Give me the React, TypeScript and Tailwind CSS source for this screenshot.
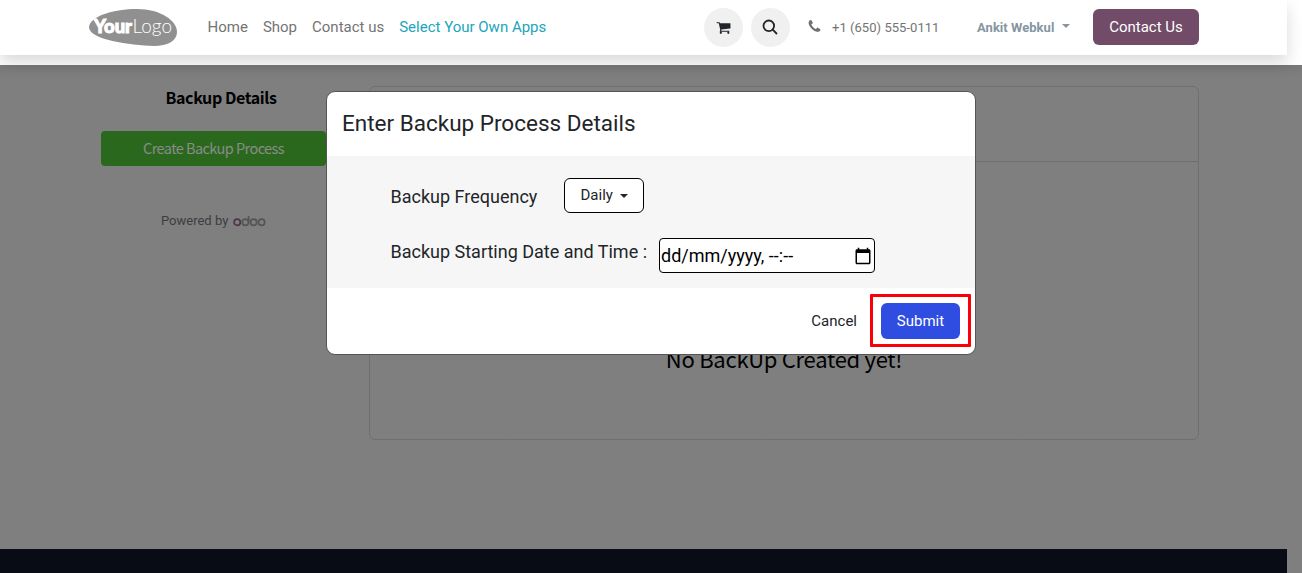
function Caret({ className }: { className: string }) {
  return (
    <svg viewBox="0 0 8 4" className={className} fill="currentColor">
      <path d="M0 0h8L4 4z" />
    </svg>
  );
}

function CartIcon() {
  return (
    <svg viewBox="0 0 1792 1792" className="size-[15px]" fill="currentColor">
      <path d="M704 1536q0 52-38 90t-90 38-90-38-38-90 38-90 90-38 90 38 38 90zm896 0q0 52-38 90t-90 38-90-38-38-90 38-90 90-38 90 38 38 90zm128-1088v512q0 24-16.5 42.5t-40.5 21.5l-1044 122q13 60 13 70 0 16-24 64h920q26 0 45 19t19 45-19 45-45 19h-1024q-26 0-45-19t-19-45q0-11 8-31.500t16-36 21.500-40 15.500-29.500l-177-823h-204q-26 0-45-19t-19-45 19-45 45-19h256q16 0 28.500 6.500t19.500 15.500 13 24.500 8 26 5.500 29.500 4.500 26h1201q26 0 45 19t19 45z" />
    </svg>
  );
}

function PhoneIcon() {
  return (
    <svg viewBox="0 0 1792 1792" className="mb-0.5 ml-[17px] size-[15px]" fill="#6f6f6f">
      <path d="M1600 1240q0 27-10 70.500t-21 68.500q-21 50-122 106-94 51-186 51-27 0-53-3.500t-57.500-12.500-47-14.500-55.500-20.500-49-18q-98-35-175-83-127-79-264-216t-216-264q-48-77-83-175-3-9-18-49t-20.500-55.500-14.500-47-12.500-57.500-3.500-53q0-92 51-186 56-101 106-122 25-11 68.500-21t70.500-10q14 0 21 3 18 6 53 76 11 19 30 54t35 63.500 31 53.500q3 4 17.500 25t21.500 35.500 7 28.500q0 20-28.500 50t-62 55-62 53-28.500 46q0 9 5 22.500t8.500 20.500 14 24 11.500 19q76 137 174 235t235 174q2 1 19 11.500t24 14 20.500 8.500 22.500 5q18 0 46-28.500t53-62 55-62 50-28.500q14 0 28.500 7t35.500 21.500 25 17.500q25 15 53.500 31t63.500 35 54 30q70 35 76 53 3 7 3 21z" />
    </svg>
  );
}

function Logo() {
  return (
    <svg viewBox="0 0 88 37" className="h-[37px] w-[88px] shrink-0">
      <path
        d="M0 18C1 7 25 0 48 0C72 0 88 12 88 23C88 32 78 37 65 37C41 36 0 31 0 18Z"
        fill="#909090"
      />
      <path d="M3.500 9.500 8 10l-1.500 3z" fill="#fff" />
      <text x="5" y="24" fill="#fff" stroke="#fff" strokeWidth="1" fontFamily="Lato, sans-serif" fontWeight="900" fontSize="19" textLength="38" lengthAdjust="spacingAndGlyphs">Your</text>
      <text x="43.500" y="24" fill="#fff" fontFamily="Lato, sans-serif" fontWeight="300" fontSize="20" textLength="39.500" lengthAdjust="spacingAndGlyphs">Logo</text>
    </svg>
  );
}

function Header() {
  return (
    <header className="relative flex h-[55px] w-[1287px] shrink-0 items-center bg-white pl-[89px] text-[15px] shadow-[0_8px_16px_rgba(0,0,0,0.15)]">
      <Logo />
      <nav className="ml-[30.5px] flex gap-[15px] whitespace-nowrap text-[#747474]">
        <a>Home</a>
        <a>Shop</a>
        <a>Contact us</a>
        <a className="text-[#20a5bb]">Select Your Own Apps</a>
      </nav>
      <div className="absolute left-[704px] flex h-full items-center whitespace-nowrap">
        <span className="flex size-[39px] items-center justify-center rounded-full bg-[#f0f0f0] pb-px text-[#212529]">
          <CartIcon />
        </span>
        <span className="ml-2 flex size-[39px] items-center justify-center rounded-full bg-[#f0f0f0] pr-px pb-0.5 text-[#212529]">
          <svg viewBox="0 0 16 16" className="size-4" fill="none" stroke="currentColor" strokeWidth="1.8">
            <circle cx="6.8" cy="6.8" r="5.3" />
            <path d="M10.7 10.700 15 15" />
          </svg>
        </span>
        <PhoneIcon />
        <span className="ml-[10px] w-[108px] text-[13px] tracking-[0.04px] text-[#747474]">+1 (650) 555-0111</span>
        <span className="ml-[37px] w-[78px] text-[13px] font-bold tracking-[0.03px] text-[#8595a2]">Ankit Webkul</span>
        <Caret className="mb-1 ml-[7px] h-1 w-2 text-[#8595a2]" />
        <button className="mb-px ml-[23px] h-9 w-[106px] rounded-[6px] bg-[#714b67] text-white">Contact Us</button>
      </div>
    </header>
  );
}

function Sidebar() {
  return (
    <aside className="ml-[101px] flex w-[240px] shrink-0 flex-col pt-[19px]">
      <h2 className="h-[26px] w-[240px] text-center font-['Noto_Sans_CJK_JP',sans-serif] text-[16px] leading-[26px] font-bold tracking-[-0.4px] text-black">Backup Details</h2>
      <button className="mt-[21px] h-[35px] w-[225px] rounded-[4px] bg-[#2a691d] pb-px font-['Noto_Sans_CJK_JP',sans-serif] text-[14.5px] tracking-[-0.57px] text-[#8b8b8b]">Create Backup Process</button>
      <p className="mt-[45px] flex h-5 items-center pl-[60px] text-[13px] whitespace-nowrap text-[#3b3d40]">
        <span className="w-[68px]">Powered by</span>
        <svg viewBox="0 0 33 12" className="ml-[3.5px] h-3 w-[33px]" fill="none" strokeWidth="1.7">
          <circle cx="4.2" cy="7.2" r="3.1" stroke="#4f354a" />
          <g stroke="#545456">
            <circle cx="12.4" cy="7.2" r="3.1" />
            <path d="M15.6 1v6" />
            <circle cx="20.6" cy="7.2" r="3.1" />
            <circle cx="28.6" cy="7.2" r="3.1" />
          </g>
        </svg>
      </p>
    </aside>
  );
}

function Modal() {
  return (
    <section className="absolute top-[91px] left-[326px] flex h-[264px] w-[650px] flex-col overflow-hidden rounded-[9px] border border-[#555] bg-white text-[#212529]">
      <div className="flex h-16 items-center px-[15px] pb-px text-[22.5px]">
        <h1>Enter Backup Process Details</h1>
      </div>
      <div className="h-[132px] bg-[#f6f6f6] pl-[63.5px] text-[18px]">
        <div className="flex pt-[22px]">
          <span className="mt-[5px] w-[173.5px]">Backup Frequency</span>
          <button className="flex h-[35px] w-20 items-center rounded-[6px] border border-black bg-white pl-[15.5px] text-[15px]">
            Daily
            <Caret className="mt-px ml-[7px] h-1 w-2" />
          </button>
        </div>
        <div className="mt-[25px] flex">
          <span className="w-[268.5px]">Backup Starting Date and Time :</span>
          <div className="flex h-[35px] w-[216px] items-center justify-between rounded-[4px] border border-black bg-white pr-[2px] pl-px text-[18px] text-black">
            <span>dd/mm/yyyy, --:--</span>
            <svg viewBox="0 0 24 24" className="size-[18px]">
              <path fill="currentColor" d="M20 3h-1V1h-2v2H7V1H5v2H4c-1.100 0-2 .9-2 2v16c0 1.100.9 2 2 2h16c1.100 0 2-.9 2-2V5c0-1.100-.9-2-2-2zm0 18H4V8h16v13z" />
            </svg>
          </div>
        </div>
      </div>
      <div className="flex h-[66px] items-center justify-end pr-1 text-[15px]">
        <button className="mr-[13px]">Cancel</button>
        <div className="mb-px flex h-[53px] w-[101px] items-center justify-center rounded-[1px] border-[3px] border-[#fb0007] pt-px">
          <button className="h-9 w-[79px] rounded-[6px] bg-[#2f4de0] text-white">Submit</button>
        </div>
      </div>
    </section>
  );
}

export default function App() {
  return (
    <div className="relative flex h-[573px] w-[1302px] flex-col overflow-hidden bg-white font-['Roboto',sans-serif]">
      <Header />
      <main className="mt-[10px] flex h-[484px] w-full shrink-0 bg-[#7f7f7f] bg-linear-to-b from-[#797979] from-0% to-[#7f7f7f] to-[12px]">
        <Sidebar />
        <div className="mt-[21px] ml-[28px] h-[354px] w-[830px] rounded-[6px] border border-[#6f6f6f]">
          <div className="h-[75px] border-b border-[#6f6f6f]" />
          <p className="mt-[178px] text-center font-['Noto_Sans_CJK_JP',sans-serif] text-[22px] leading-9 tracking-[-0.28px] text-black">No BackUp Created yet!</p>
        </div>
      </main>
      <footer className="flex h-6 shrink-0 bg-[#7f7f7f]">
        <div className="w-[1287px] bg-[#080d15]" />
      </footer>
      <Modal />
    </div>
  );
}
